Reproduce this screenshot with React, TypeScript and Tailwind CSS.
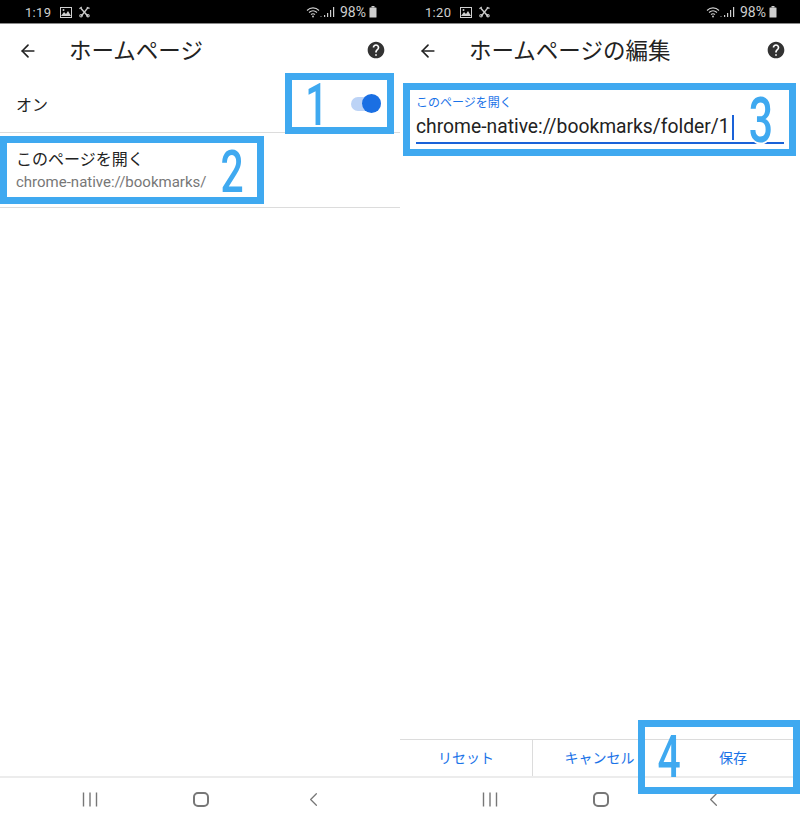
import { ReactNode } from "react";
import { ArrowLeft, ChevronLeft } from "lucide-react";

const jp = "font-['Roboto','Noto_Sans_CJK_JP',sans-serif]";

function StatusBar({ time }: { time: string }) {
  return (
    <div className="flex h-[24px] shrink-0 items-center border-b border-[#8a8a8a] bg-black pl-[25px] pr-[23px] pt-[1px] text-[#cfcfcf]">
      <span className="text-[13px] leading-none tracking-[0.3px]">{time}</span>
      <svg viewBox="0 0 12 11" className="ml-[9px] h-[11px] w-[12px]">
        <rect x="0.5" y="0.5" width="11" height="10" fill="none" stroke="#cfcfcf" />
        <path d="M1 9l3-4 2 2 2-3 3 5z" fill="#cfcfcf" />
        <circle cx="3.5" cy="3" r="1" fill="#cfcfcf" />
      </svg>
      <svg viewBox="0 0 12 12" className="ml-[7px] h-[12px] w-[11px]" stroke="#cfcfcf" fill="none">
        <path d="M2.5 10.5L9.5 1.5" strokeWidth="1.6" />
        <path d="M2 2l8 9" strokeWidth="1.6" />
        <circle cx="2.2" cy="10" r="1.4" strokeWidth="1.1" />
        <path d="M0.5 2.5L3 .5M8.5 1l3 1" strokeWidth="1.3" />
        <circle cx="9.8" cy="10" r="1.4" strokeWidth="1.1" />
      </svg>
      <div className="ml-auto flex items-center">
        <svg viewBox="0 0 16 12" className="h-[12px] w-[16px]" fill="none" stroke="#cfcfcf" strokeWidth="1.1">
          <path d="M1 4.5C4.5 1 9.5 1 13 4.5" />
          <path d="M3 6.5c2.5-2.2 5.5-2.2 8 0" />
          <path d="M5 8.5c1.4-1.1 2.6-1.1 4 0" />
          <circle cx="7" cy="10.5" r="0.9" fill="#cfcfcf" stroke="none" />
          <circle cx="15" cy="10.5" r="0.5" fill="#cfcfcf" stroke="none" />
        </svg>
        <svg viewBox="0 0 11 12" className="ml-[2px] h-[12px] w-[11px]" fill="#cfcfcf">
          <rect x="0" y="9" width="1.2" height="2" />
          <rect x="3" y="7" width="1.2" height="4" />
          <rect x="6" y="4" width="1.2" height="7" />
          <rect x="9" y="1" width="1.2" height="10" />
        </svg>
        <span className="ml-[5px] text-[14px] leading-none">98%</span>
        <svg viewBox="0 0 8 12" className="ml-[3px] h-[12px] w-[8px]" fill="#cfcfcf">
          <rect x="2.5" y="0" width="3" height="1.5" />
          <rect x="0.5" y="1.5" width="7" height="10" rx="0.5" />
        </svg>
      </div>
    </div>
  );
}

function AppBar({ title }: { title: string }) {
  return (
    <div className="flex h-[52px] shrink-0 items-center pl-[18px] pr-[14px]">
      <ArrowLeft size={20} strokeWidth={2} className="mt-[1px] text-[#222]" />
      <h1 className="mt-[2px] ml-[31px] text-[22.5px] leading-none font-normal text-[#222]">{title}</h1>
      <svg viewBox="0 0 24 24" className="ml-auto h-[20px] w-[20px]" fill="#333">
        <path d="M12 2C6.48 2 2 6.48 2 12s4.48 10 10 10 10-4.48 10-10S17.52 2 12 2zm1 17h-2v-2h2v2zm2.07-7.75l-.9.92C13.45 12.9 13 13.5 13 15h-2v-.5c0-1.1.45-2.1 1.17-2.83l1.24-1.26c.37-.36.59-.86.59-1.41 0-1.1-.9-2-2-2s-2 .9-2 2H8c0-2.21 1.79-4 4-4s4 1.79 4 4c0 .88-.36 1.68-.93 2.25z" />
      </svg>
    </div>
  );
}

function NavBar() {
  return (
    <div className="flex h-[46px] shrink-0 items-center border-t-2 border-[#ececec] pb-[2px] text-[#777]">
      <div className="flex w-[98px] justify-end">
        <svg viewBox="0 0 16 14" className="h-[15px] w-[16px]" stroke="#777" strokeWidth="1.4">
          <path d="M1.5 0v14M8 0v14M14.5 0v14" />
        </svg>
      </div>
      <div className="ml-[95px] h-[15px] w-[16px] rounded-[5px] border-2 border-[#777]" />
      <ChevronLeft size={23} strokeWidth={1.3} className="ml-[93px]" />
    </div>
  );
}

// blue callout frame with its step number, drawn on top of the screen
function Callout({ className, digit, digitClass }: { className: string; digit: string; digitClass: string }) {
  return (
    <div className={`absolute border-[7px] border-[#3fa9f0] ${className}`}>
      <span
        className={`absolute origin-center scale-x-[0.68] font-['Roboto',sans-serif] leading-none font-medium text-[#3fa9f0] ${digitClass}`}
      >
        {digit}
      </span>
    </div>
  );
}

function Pane({ children }: { children: ReactNode }) {
  return <div className="relative flex h-[822px] w-[400px] flex-col overflow-hidden bg-white">{children}</div>;
}

export default function App() {
  return (
    <div className={`flex w-[800px] ${jp}`}>
      <Pane>
        <StatusBar time="1:19" />
        <AppBar title="ホームページ" />
        <div className="flex h-[57px] shrink-0 items-center justify-between border-b border-[#dcdcdc] pl-[16px] pr-[19px]">
          <span className="mt-[3px] text-[16px] text-[#222]">オン</span>
          <div className="relative h-[14px] w-[30px] rounded-full bg-[#bcd3f6]">
            <div className="absolute top-[-3px] right-0 h-[19px] w-[19px] rounded-full bg-[#1a6fe3]" />
          </div>
        </div>
        <div className="flex h-[75px] shrink-0 flex-col justify-center border-b border-[#dcdcdc] pl-[16px] pt-[2px]">
          <span className="text-[16px] leading-[22px] text-[#222]">このページを開く</span>
          <span className="text-[15px] leading-[22px] text-[#777]">chrome-native://bookmarks/</span>
        </div>
        <div className="flex-1" />
        <NavBar />
        <Callout
          className="top-[73px] left-[285px] h-[61px] w-[109px]"
          digit="1"
          digitClass="top-[-5px] left-[8px] text-[59px]"
        />
        <Callout
          className="top-[136px] left-0 h-[68px] w-[264px]"
          digit="2"
          digitClass="top-[-1px] left-[208px] text-[60px]"
        />
      </Pane>
      <Pane>
        <StatusBar time="1:20" />
        <AppBar title="ホームページの編集" />
        <div className="mx-[16px] mt-[19px] shrink-0">
          <div className="text-[12px] leading-[16px] text-[#1a73e8]">このページを開く</div>
          <div className="flex h-[33px] items-center border-b-2 border-[#1a62d8] pt-[2px] text-[19.3px] text-[#222]">
            <span>chrome-native://bookmarks/folder/1</span>
            <span className="ml-[2px] h-[25px] w-[2px] bg-[#1a62d8]" />
          </div>
        </div>
        <div className="flex-1" />
        <div className="flex h-[37px] shrink-0 border-t border-[#dcdcdc] text-[14px] text-[#1a73e8]">
          <div className="flex w-[133px] items-center justify-center border-r border-[#dcdcdc]">リセット</div>
          <div className="flex w-[133px] items-center justify-center">キャンセル</div>
          <div className="flex w-[134px] items-center justify-center">保存</div>
        </div>
        <NavBar />
        <Callout
          className="top-[83px] left-[3px] h-[73px] w-[393px]"
          digit="3"
          digitClass="top-[-1px] left-[333px] text-[63px] [text-shadow:0_2px_0_#fff,2px_0_0_#fff,-2px_0_0_#fff]"
        />
        <Callout
          className="top-[720px] left-[238px] h-[74px] w-[162px]"
          digit="4"
          digitClass="top-[0px] left-[7px] text-[60px]"
        />
      </Pane>
    </div>
  );
}
